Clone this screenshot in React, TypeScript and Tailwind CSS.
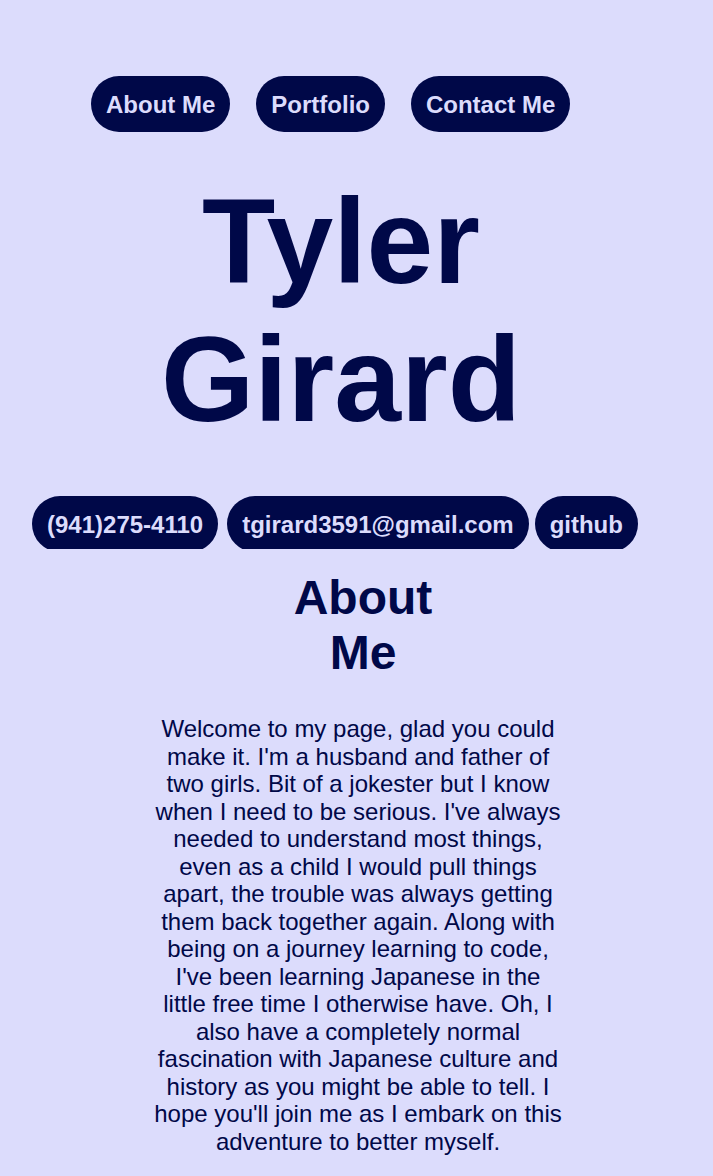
const navItems = ["About Me", "Portfolio", "Contact Me"]

const pill =
  "shrink-0 rounded-full bg-[#000848] px-[15px] pt-[15px] pb-[13px] text-[24px] font-bold leading-[28px] text-[#dcdcfc] whitespace-nowrap"

function App(): React.ReactElement {
  return (
    <div className="min-h-screen bg-[#dcdcfc] pb-10 font-['Liberation_Sans',Arial,sans-serif] text-[#000848]">
      {/* top nav */}
      <nav className="flex gap-[26px] pl-[91px] pt-[76px]">
        {navItems.map((item) => (
          <a key={item} href="#" className={pill}>
            {item}
          </a>
        ))}
      </nav>

      <h1 className="ml-[141px] mt-[40px] w-[400px] text-center text-[120px] font-bold leading-[138px]">
        Tyler Girard
      </h1>

      {/* contact links, bottom is clipped */}
      <div className="mt-[48px] flex h-[53px] items-start overflow-hidden pl-[32px]">
        <a href="#" className={pill}>(941)275-4110</a>
        <a href="#" className={`${pill} ml-[9px]`}>tgirard3591@gmail.com</a>
        <a href="#" className={`${pill} ml-[6px]`}>github</a>
      </div>

      <h2 className="ml-[273px] mt-[21px] w-[180px] text-center text-[48px] font-bold leading-[55px]">
        About Me
      </h2>

      <p className="ml-[151px] mt-[35px] w-[414px] text-center text-[24px] leading-[27.5px]">
        Welcome to my page, glad you could make it. I'm a husband and father of two girls. Bit of a
        jokester but I know when I need to be serious. I've always needed to understand most things,
        even as a child I would pull things apart, the trouble was always getting them back together
        again. Along with being on a journey learning to code, I've been learning Japanese in the
        little free time I otherwise have. Oh, I also have a completely normal fascination with
        Japanese culture and history as you might be able to tell. I hope you'll join me as I embark
        on this adventure to better myself.
      </p>
    </div>
  )
}

export default App
